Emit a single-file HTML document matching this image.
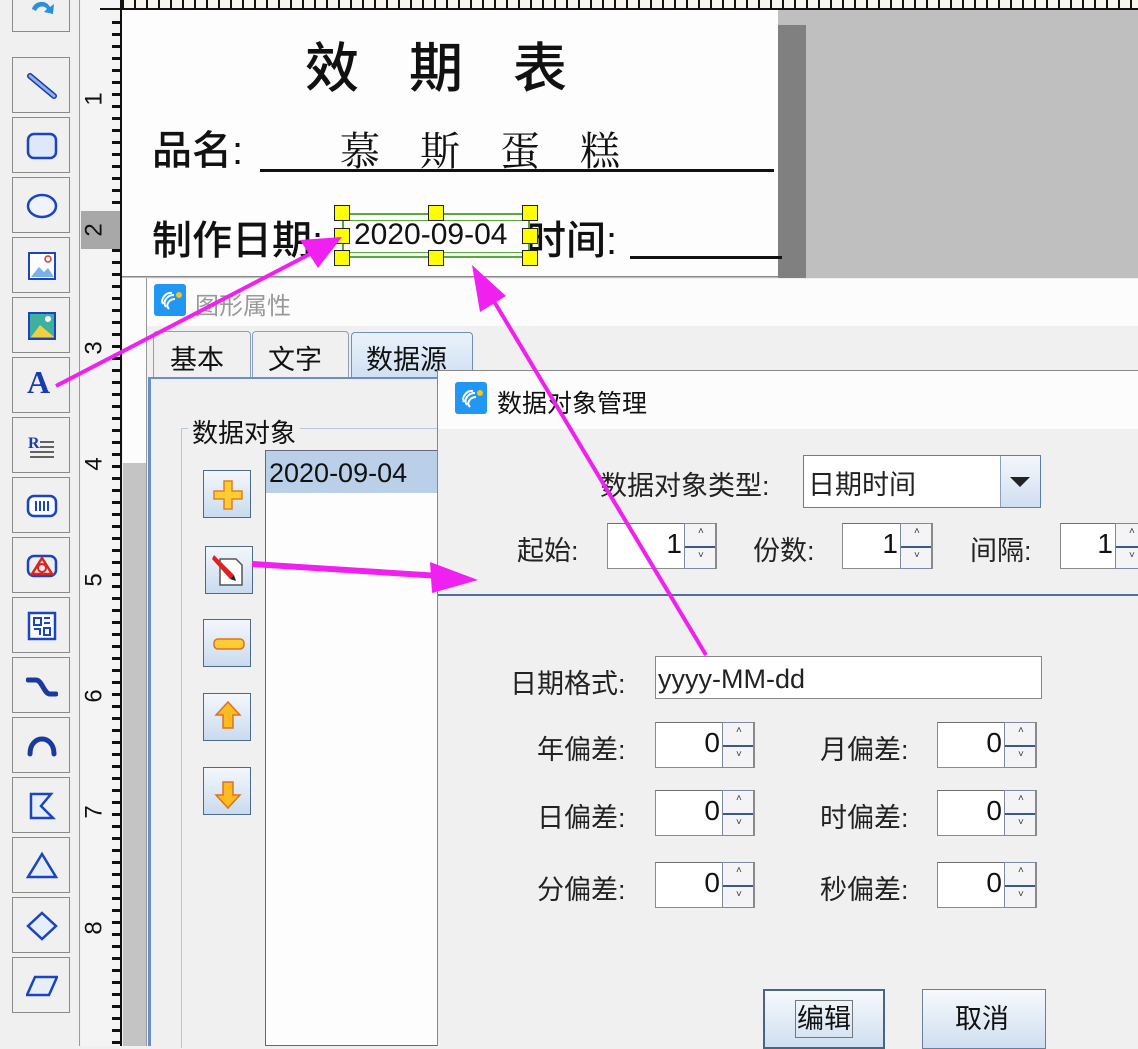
<!DOCTYPE html>
<html><head><meta charset="utf-8">
<style>
*{box-sizing:border-box;margin:0;padding:0}
body{width:1138px;height:1046px;overflow:hidden;position:relative;background:#f0f0f0;font-family:"Liberation Sans","Noto Sans CJK SC",sans-serif;color:#111}
.a{position:absolute}
.tb{position:absolute;left:12px;width:58px;height:56px;border:1px solid #8a8a8a;background:#f0f0f0}
.tb svg{position:absolute;left:13px;top:12px}
.lbl{position:absolute;font-size:27px;color:#222;white-space:nowrap}
.spin{position:absolute;height:46px;background:#fff;border:1px solid #8b8b8b;border-top-color:#6e6e6e}
.spin .v{position:absolute;right:34px;top:4px;font-size:28px}
.spin .s{position:absolute;right:0;top:-1px;bottom:-1px;width:32px;border:1px solid #7a8aa0;background:#f4f4f6}
.spin .s:before{content:"";position:absolute;left:0;right:0;top:50%;border-top:2px solid #3b5a85}
.spin .s i{position:absolute;left:13px;font-style:normal;font-size:10px;color:#333}
.btn{position:absolute;width:48px;height:48px;border:1px solid #4d6a88;background:linear-gradient(#f4f7fb,#c9dbef)}
</style></head><body>

<!-- left toolbar -->
<div class="a" style="left:0;top:0;width:80px;height:1046px;background:#f0f0f0;border-right:1px solid #9a9a9a"></div>
<div class="tb" style="top:-24px"><svg width="32" height="32" viewBox="0 0 32 32" style="top:18px"><path d="M6 14c2-8 14-10 18-2l4-3-1 10-9-2 3-3c-3-4-9-3-11 2z" fill="#2a8fe0"/></svg></div>
<div class="tb" style="top:57px"><svg width="32" height="32"><line x1="4" y1="6" x2="28" y2="26" stroke="#1a3aa0" stroke-width="6" stroke-linecap="round"/><line x1="4" y1="6" x2="28" y2="26" stroke="#8fb0ee" stroke-width="3" stroke-linecap="round"/></svg></div>
<div class="tb" style="top:117px"><svg width="32" height="32"><rect x="2" y="4" width="28" height="24" rx="6" fill="#dde8fb" stroke="#1a44c0" stroke-width="2.5"/></svg></div>
<div class="tb" style="top:177px"><svg width="32" height="32"><ellipse cx="16" cy="16" rx="14" ry="11" fill="#eef3fd" stroke="#1a44c0" stroke-width="2.5"/></svg></div>
<div class="tb" style="top:237px"><svg width="32" height="32"><rect x="3" y="3" width="26" height="26" fill="#fff" stroke="#1a44c0" stroke-width="2"/><path d="M5 27l8-10 5 5 4-4 6 9z" fill="#7ab0ee"/><circle cx="22" cy="9" r="3" fill="none" stroke="#d33" stroke-width="1.5"/></svg></div>
<div class="tb" style="top:297px"><svg width="32" height="32"><rect x="3" y="3" width="26" height="26" fill="#3fb0a0" stroke="#1a44c0" stroke-width="2"/><path d="M5 27l9-12 14 12z" fill="#f0d040"/><circle cx="22" cy="9" r="3" fill="#fff"/></svg></div>
<div class="tb" style="top:357px"><div class="a" style="left:14px;top:6px;font:bold 32px 'Liberation Serif',serif;color:#1a3ab0">A</div></div>
<div class="tb" style="top:417px"><svg width="32" height="32"><text x="2" y="18" font-size="16" font-weight="bold" fill="#1a3ab0" font-family="Liberation Serif">R</text><path d="M14 12h14M14 17h14M4 22h24M4 27h24" stroke="#333" stroke-width="1.5"/></svg></div>
<div class="tb" style="top:477px"><svg width="32" height="32"><rect x="2" y="6" width="28" height="20" rx="6" fill="#fff" stroke="#1a44c0" stroke-width="2.5"/><path d="M10 11v10M14 11v10M18 11v10M22 11v10" stroke="#1a44c0" stroke-width="2"/></svg></div>
<div class="tb" style="top:537px"><svg width="32" height="32"><rect x="2" y="6" width="28" height="20" rx="6" fill="#eee" stroke="#1a44c0" stroke-width="2.5"/><path d="M6 24L16 8l10 16z" fill="none" stroke="#d22" stroke-width="2.5"/><circle cx="16" cy="18" r="4" fill="none" stroke="#d22" stroke-width="2"/></svg></div>
<div class="tb" style="top:597px"><svg width="32" height="32"><rect x="3" y="3" width="26" height="26" fill="#fff" stroke="#1a44c0" stroke-width="2.5"/><path d="M8 8h7v7H8zM18 8h6M18 13h6M8 19h6v6M18 18h6v7h-6z" fill="none" stroke="#1a44c0" stroke-width="2"/></svg></div>
<div class="tb" style="top:657px"><svg width="32" height="32"><path d="M2 10h8c6 0 8 14 14 14h6" fill="none" stroke="#1a3aa0" stroke-width="5" stroke-linecap="round"/></svg></div>
<div class="tb" style="top:717px"><svg width="32" height="32"><path d="M4 24C4 4 28 4 28 24" fill="none" stroke="#1a3aa0" stroke-width="5" stroke-linecap="round"/></svg></div>
<div class="tb" style="top:777px"><svg width="32" height="32"><path d="M5 4h20l-10 12 12 12H5z" fill="#e6eefc" stroke="#1a44c0" stroke-width="2.5"/></svg></div>
<div class="tb" style="top:837px"><svg width="32" height="32"><path d="M16 4L30 27H2z" fill="#e6eefc" stroke="#1a44c0" stroke-width="2.5"/></svg></div>
<div class="tb" style="top:897px"><svg width="32" height="32"><path d="M16 3L30 16 16 29 2 16z" fill="#e6eefc" stroke="#1a44c0" stroke-width="2.5"/></svg></div>
<div class="tb" style="top:957px"><svg width="32" height="32"><path d="M9 7h22l-8 18H1z" fill="#e6eefc" stroke="#1a44c0" stroke-width="2.5"/></svg></div>

<!-- rulers -->
<div class="a" style="left:81px;top:0;width:41px;height:1046px;background:#f4f4f4;border-right:2px solid #111"></div>
<div class="a" style="left:112px;top:12px;width:8px;height:1034px;background:repeating-linear-gradient(#f4f4f4 0 9px,#111 9px 12px)"></div>
<div class="a" style="left:81px;top:211px;width:39px;height:38px;background:#a8a8a8"></div>
<div class="a" style="left:122px;top:0;width:1016px;height:9px;background:repeating-linear-gradient(90deg,#111 0 2px,#f6f6ee 2px 12px)"></div>
<div class="a" style="left:100px;top:8px;width:1038px;height:2px;background:#111"></div>
<div class="a" style="left:88px;top:85px;font-size:24px;transform:rotate(-90deg)">1</div>
<div class="a" style="left:88px;top:216px;font-size:24px;transform:rotate(-90deg)">2</div>
<div class="a" style="left:88px;top:334px;font-size:24px;transform:rotate(-90deg)">3</div>
<div class="a" style="left:88px;top:450px;font-size:24px;transform:rotate(-90deg)">4</div>
<div class="a" style="left:88px;top:566px;font-size:24px;transform:rotate(-90deg)">5</div>
<div class="a" style="left:88px;top:682px;font-size:24px;transform:rotate(-90deg)">6</div>
<div class="a" style="left:88px;top:798px;font-size:24px;transform:rotate(-90deg)">7</div>
<div class="a" style="left:88px;top:914px;font-size:24px;transform:rotate(-90deg)">8</div>
<div class="a" style="left:123px;top:278px;width:24px;height:185px;background:#fcfcfc"></div>
<div class="a" style="left:123px;top:463px;width:24px;height:583px;background:#c4c4c4"></div>

<!-- canvas -->
<div class="a" style="left:122px;top:10px;width:1016px;height:268px;background:#bfbfbf"></div>
<div class="a" style="left:778px;top:25px;width:28px;height:253px;background:#808080"></div>
<div class="a" style="left:122px;top:10px;width:656px;height:267px;background:#fdfdfd;border-bottom:1px solid #888"></div>
<div class="a" style="left:305px;top:24px;font-size:54px;letter-spacing:50px;font-weight:500">效期表</div>
<div class="a" style="left:152px;top:118px;font-size:40px;font-weight:500">品名:</div>
<div class="a" style="left:340px;top:120px;font:40px 'Liberation Serif','Noto Serif CJK SC',serif;letter-spacing:40px">慕斯蛋糕</div>
<div class="a" style="left:260px;top:169px;width:514px;height:3px;background:#111"></div>
<div class="a" style="left:152px;top:208px;font-size:40px;font-weight:500">制作日期:</div>
<div class="a" style="left:354px;top:218px;font-size:30px">2020-09-04</div>
<div class="a" style="left:526px;top:208px;font-size:40px;font-weight:500">时间:</div>
<div class="a" style="left:630px;top:256px;width:152px;height:3px;background:#111"></div>
<div class="a" style="left:342px;top:213px;width:188px;height:45px;border:2px solid #5aaa3a"></div>
<div class="a" style="left:342px;top:220px;width:188px;height:1px;background:#5aaa3a"></div>
<div class="a" style="left:342px;top:252px;width:188px;height:1px;background:#5aaa3a"></div>
<div class="a" style="left:334px;top:205px;width:16px;height:16px;background:#ff0;border:1.5px solid #222"></div>
<div class="a" style="left:428px;top:205px;width:16px;height:16px;background:#ff0;border:1.5px solid #222"></div>
<div class="a" style="left:522px;top:205px;width:16px;height:16px;background:#ff0;border:1.5px solid #222"></div>
<div class="a" style="left:334px;top:228px;width:16px;height:16px;background:#ff0;border:1.5px solid #222"></div>
<div class="a" style="left:522px;top:228px;width:16px;height:16px;background:#ff0;border:1.5px solid #222"></div>
<div class="a" style="left:334px;top:250px;width:16px;height:16px;background:#ff0;border:1.5px solid #222"></div>
<div class="a" style="left:428px;top:250px;width:16px;height:16px;background:#ff0;border:1.5px solid #222"></div>
<div class="a" style="left:522px;top:250px;width:16px;height:16px;background:#ff0;border:1.5px solid #222"></div>

<!-- dialog 1 -->
<div class="a" style="left:146px;top:278px;width:992px;height:768px;background:#f0f0f0;border-left:1px solid #999"></div>
<div class="a" style="left:147px;top:279px;width:991px;height:47px;background:#fcfcfc"></div>
<svg class="a" style="left:154px;top:284px" width="32" height="32"><rect width="32" height="32" rx="3" fill="#2196f3"/><path d="M9 20c-3-5 3-12 9-11M12 23c-4-5 1-12 8-12M15 25c-4-4 0-10 6-10" fill="none" stroke="#fff" stroke-width="2"/><circle cx="25" cy="11" r="3" fill="#f5c518"/></svg>
<div class="a" style="left:195px;top:286px;font-size:24px;color:#999">图形属性</div>
<!-- tabs -->
<div class="a" style="left:153px;top:331px;width:98px;height:46px;border:1px solid #8aa0bb;border-bottom:none;background:#f0f0f0;border-radius:4px 4px 0 0"></div>
<div class="a" style="left:170px;top:338px;font-size:27px">基本</div>
<div class="a" style="left:252px;top:331px;width:97px;height:46px;border:1px solid #8aa0bb;border-bottom:none;background:#f0f0f0;border-radius:4px 4px 0 0"></div>
<div class="a" style="left:268px;top:338px;font-size:27px">文字</div>
<div class="a" style="left:351px;top:332px;width:122px;height:46px;border:1px solid #6f8fbb;border-bottom:none;background:linear-gradient(#eaf2fb,#cfe0f3);border-radius:4px 4px 0 0"></div>
<div class="a" style="left:366px;top:338px;font-size:27px">数据源</div>
<div class="a" style="left:148px;top:377px;width:300px;height:669px;border-left:3px solid #6a8fc4;border-top:2px solid #6a8fc4;background:#f0f0f0"></div>
<div class="a" style="left:181px;top:428px;width:270px;height:620px;border-left:1px solid #b8c8d8;border-top:1px solid #b8c8d8"></div>
<div class="a" style="left:188px;top:413px;font-size:26px;background:#f0f0f0;padding:0 4px">数据对象</div>
<div class="a" style="left:265px;top:450px;width:175px;height:596px;background:#fdfdfd;border:1px solid #667"></div>
<div class="a" style="left:266px;top:451px;width:174px;height:42px;background:#b9d0e8"></div>
<div class="a" style="left:269px;top:458px;font-size:27px">2020-09-04</div>
<div class="btn" style="left:203px;top:470px"><svg width="48" height="48"><path d="M20 10h8v10h10v8H28v10h-8V28H10v-8h10z" fill="#fc3" stroke="#e08020" stroke-width="1.5"/></svg></div>
<div class="btn" style="left:205px;top:546px"><svg width="48" height="48"><path d="M14 12h16l6 6v20H14z" fill="#fff" stroke="#555" stroke-width="1.5"/><path d="M8 8l20 20-4 4L6 12z" fill="#d22"/><path d="M24 32l6 2-2-6" fill="#222"/></svg></div>
<div class="btn" style="left:203px;top:619px"><svg width="48" height="48"><rect x="10" y="19" width="30" height="10" rx="4" fill="#fc3" stroke="#e07020" stroke-width="1.5"/></svg></div>
<div class="btn" style="left:203px;top:693px"><svg width="48" height="48"><path d="M24 8l12 13h-7v13h-10V21h-7z" fill="#fb2" stroke="#e07020" stroke-width="1.5"/></svg></div>
<div class="btn" style="left:203px;top:767px"><svg width="48" height="48"><path d="M24 40l12-13h-7V14h-10v13h-7z" fill="#fb2" stroke="#e07020" stroke-width="1.5"/></svg></div>

<!-- dialog 2 -->
<div class="a" style="left:437px;top:370px;width:701px;height:676px;background:#f0f0f0;border-left:1px solid #888;border-top:1px solid #888"></div>
<div class="a" style="left:438px;top:371px;width:700px;height:58px;background:#fcfcfc"></div>
<svg class="a" style="left:455px;top:382px" width="32" height="32"><rect width="32" height="32" rx="3" fill="#2196f3"/><path d="M9 20c-3-5 3-12 9-11M12 23c-4-5 1-12 8-12M15 25c-4-4 0-10 6-10" fill="none" stroke="#fff" stroke-width="2"/><circle cx="25" cy="11" r="3" fill="#f5c518"/></svg>
<div class="a" style="left:497px;top:384px;font-size:25px">数据对象管理</div>
<div class="lbl" style="left:600px;top:464px">数据对象类型:</div>
<div class="a" style="left:803px;top:455px;width:238px;height:53px;border:1px solid #5a7fb0;background:#fff"></div>
<div class="a" style="left:1000px;top:456px;width:40px;height:51px;background:linear-gradient(#f4f7fb,#cfdff0);border-left:1px solid #8aa0c0"></div>
<svg class="a" style="left:1008px;top:475px" width="24" height="14"><path d="M2 2h20L12 12z" fill="#222"/></svg>
<div class="lbl" style="left:808px;top:463px;font-size:27px">日期时间</div>
<div class="lbl" style="left:517px;top:529px">起始:</div>
<div class="spin" style="left:607px;top:523px;width:110px"><span class="v">1</span><span class="s"><i style="top:2px">˄</i><i style="top:26px">˅</i></span></div>
<div class="lbl" style="left:753px;top:529px">份数:</div>
<div class="spin" style="left:842px;top:523px;width:91px"><span class="v">1</span><span class="s"><i style="top:2px">˄</i><i style="top:26px">˅</i></span></div>
<div class="lbl" style="left:970px;top:529px">间隔:</div>
<div class="spin" style="left:1060px;top:523px;width:100px"><span class="v" style="right:46px">1</span><span class="s" style="right:12px"><i style="top:2px">˄</i><i style="top:26px">˅</i></span></div>
<div class="a" style="left:438px;top:594px;width:700px;height:2px;background:#4f6f9f"></div>
<div class="lbl" style="left:510px;top:662px">日期格式:</div>
<div class="a" style="left:655px;top:656px;width:387px;height:43px;background:#fff;border:1px solid #888"></div>
<div class="a" style="left:658px;top:664px;font-size:27px;color:#222">yyyy-MM-dd</div>

<div class="lbl" style="left:537px;top:728px">年偏差:</div>
<div class="spin" style="left:655px;top:722px;width:100px"><span class="v">0</span><span class="s"><i style="top:2px">˄</i><i style="top:26px">˅</i></span></div>
<div class="lbl" style="left:820px;top:728px">月偏差:</div>
<div class="spin" style="left:937px;top:722px;width:100px"><span class="v">0</span><span class="s"><i style="top:2px">˄</i><i style="top:26px">˅</i></span></div>
<div class="lbl" style="left:537px;top:796px">日偏差:</div>
<div class="spin" style="left:655px;top:790px;width:100px"><span class="v">0</span><span class="s"><i style="top:2px">˄</i><i style="top:26px">˅</i></span></div>
<div class="lbl" style="left:820px;top:796px">时偏差:</div>
<div class="spin" style="left:937px;top:790px;width:100px"><span class="v">0</span><span class="s"><i style="top:2px">˄</i><i style="top:26px">˅</i></span></div>
<div class="lbl" style="left:537px;top:868px">分偏差:</div>
<div class="spin" style="left:655px;top:862px;width:100px"><span class="v">0</span><span class="s"><i style="top:2px">˄</i><i style="top:26px">˅</i></span></div>
<div class="lbl" style="left:820px;top:868px">秒偏差:</div>
<div class="spin" style="left:937px;top:862px;width:100px"><span class="v">0</span><span class="s"><i style="top:2px">˄</i><i style="top:26px">˅</i></span></div>

<div class="a" style="left:763px;top:989px;width:122px;height:60px;border:2px solid #4a6485;background:linear-gradient(#f6f9fc,#cfdff0)"></div>
<div class="a" style="left:795px;top:1000px;font-size:27px;border:1px solid #777;padding:0 1px;line-height:36px">编辑</div>
<div class="a" style="left:922px;top:989px;width:124px;height:60px;border:1px solid #6a7f99;background:linear-gradient(#f6f9fc,#cfdff0)"></div>
<div class="a" style="left:955px;top:1001px;font-size:27px;line-height:36px">取消</div>

<!-- magenta arrows -->
<svg class="a" style="left:0;top:0" width="1138" height="1046">
<g fill="#f020f0" stroke="#f020f0">
<line x1="56" y1="386" x2="310" y2="254" stroke-width="4"/>
<path d="M342 237L300 240L318 268z" stroke="none"/>
<line x1="252" y1="564" x2="440" y2="576" stroke-width="6"/>
<path d="M478 580L430 562L432 593z" stroke="none"/>
<line x1="706" y1="655" x2="492" y2="298" stroke-width="4"/>
<path d="M472 265L480 312L506 296z" stroke="none"/>
</g>
</svg>
</body></html>
